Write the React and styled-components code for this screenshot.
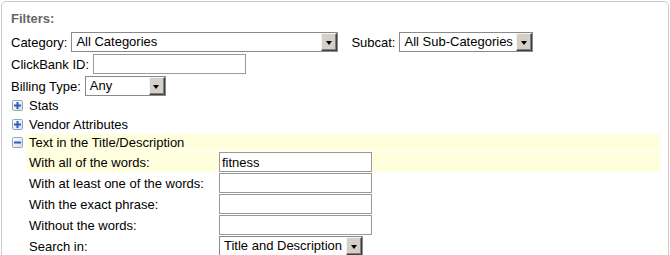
import React from "react";
import styled, { createGlobalStyle } from "styled-components";

const GlobalStyle = createGlobalStyle`
  html, body {
    margin: 0;
    padding: 0;
    background: #fff;
  }
  body {
    font-family: "Liberation Sans", Arial, sans-serif;
    font-size: 13px;
    color: #000;
  }
`;

const Panel = styled.div`
  box-sizing: border-box;
  margin: 1px 0 0 1px;
  width: 668px;
  height: 300px;
  border: 1px solid #cccccc;
  border-radius: 5px;
  padding: 9px 9px 8px;
`;

const Heading = styled.div`
  font-weight: bold;
  color: #666;
  line-height: 15px;
  margin-bottom: 5px;
`;

const FieldRow = styled.div`
  display: flex;
  align-items: center;
  height: 22px;
  gap: 4px;
  line-height: 15px;
`;

const Spacer = styled.span`
  width: 5px;
`;

const SelectBox = styled.div`
  box-sizing: border-box;
  display: flex;
  align-items: stretch;
  width: ${(p) => p.$w}px;
  height: 20px;
  border: 1px solid #8a8a8a;
  background: #fff;
`;

const SelectText = styled.span`
  flex: 1;
  padding-left: 4px;
  line-height: 18px;
  white-space: nowrap;
  overflow: hidden;
`;

const ArrowButton = styled.span`
  box-sizing: border-box;
  width: 16px;
  display: flex;
  align-items: center;
  justify-content: center;
  background: #d4d0c8;
  border-top: 1px solid #f4f3ef;
  border-left: 1px solid #f4f3ef;
  border-right: 1px solid #404040;
  border-bottom: 1px solid #404040;
  box-shadow: inset -1px -1px 0 #808080;

  &::after {
    content: "";
    width: 0;
    height: 0;
    border-left: 3.5px solid transparent;
    border-right: 3.5px solid transparent;
    border-top: 4px solid #000;
    margin: 1px 1px 0 0;
  }
`;

const TextInput = styled.input`
  box-sizing: border-box;
  width: ${(p) => p.$w || 153}px;
  height: 20px;
  margin: 0;
  border: 1px solid #9a9a9a;
  padding: 0 2px;
  font-family: "Liberation Sans", Arial, sans-serif;
  font-size: 13px;
  color: #000;
  background: #fff;
  outline: none;
`;

const ToggleList = styled.div`
  display: flex;
  flex-direction: column;
  gap: 1px;
  margin-top: -1px;
`;

const ToggleRow = styled.div`
  display: grid;
  grid-template-columns: 16px 1fr;
  height: ${(p) => p.$h || 18}px;
  align-items: center;
`;

const ToggleLabel = styled.div`
  height: 100%;
  display: flex;
  align-items: center;
  padding-left: 2px;
  background: ${(p) => (p.$hl ? "#ffffdd" : "transparent")};
  margin-right: -1px;
`;

const SubRow = styled.div`
  display: grid;
  grid-template-columns: 192px 153px 1fr;
  height: 20px;
  margin-left: 16px;
  margin-right: -1px;
  background: ${(p) => (p.$hl ? "#ffffdd" : "transparent")};
`;

const SubLabel = styled.div`
  display: flex;
  align-items: center;
  padding-left: 2px;
`;

function ToggleIcon({ open }) {
  return (
    <svg width="11" height="11" viewBox="0 0 11 11" style={{ marginLeft: 1 }}>
      <defs>
        <linearGradient id="tg" x1="0" y1="0" x2="1" y2="1">
          <stop offset="0" stopColor="#ffffff" />
          <stop offset="1" stopColor="#d8dde6" />
        </linearGradient>
      </defs>
      <rect x="0.5" y="0.5" width="10" height="10" rx="1" fill="url(#tg)" stroke="#9aa3b0" />
      <rect x="2" y="4.5" width="7" height="2" fill="#2a5cc6" />
      {!open && <rect x="4.5" y="2" width="2" height="7" fill="#2a5cc6" />}
    </svg>
  );
}

function Select({ width, value }) {
  return (
    <SelectBox $w={width}>
      <SelectText>{value}</SelectText>
      <ArrowButton />
    </SelectBox>
  );
}

const textRows = [
  { label: "With all of the words:", value: "fitness", hl: true },
  { label: "With at least one of the words:", value: "" },
  { label: "With the exact phrase:", value: "" },
  { label: "Without the words:", value: "" },
];

export default function App() {
  return (
    <>
      <GlobalStyle />
      <Panel>
        <Heading>Filters:</Heading>
        <FieldRow>
          <span>Category:</span>
          <Select width={267} value="All Categories" />
          <Spacer />
          <span>Subcat:</span>
          <Select width={134} value="All Sub-Categories" />
        </FieldRow>
        <FieldRow>
          <span>ClickBank ID:</span>
          <TextInput $w={153} defaultValue="" />
        </FieldRow>
        <FieldRow>
          <span>Billing Type:</span>
          <Select width={81} value="Any" />
        </FieldRow>
        <ToggleList>
          <ToggleRow>
            <ToggleIcon />
            <ToggleLabel>Stats</ToggleLabel>
          </ToggleRow>
          <ToggleRow>
            <ToggleIcon />
            <ToggleLabel>Vendor Attributes</ToggleLabel>
          </ToggleRow>
          <ToggleRow $h={17}>
            <ToggleIcon open />
            <ToggleLabel $hl>Text in the Title/Description</ToggleLabel>
          </ToggleRow>
          {textRows.map((r) => (
            <SubRow key={r.label} $hl={r.hl}>
              <SubLabel>{r.label}</SubLabel>
              <TextInput defaultValue={r.value} />
            </SubRow>
          ))}
          <SubRow>
            <SubLabel>Search in:</SubLabel>
            <Select width={144} value="Title and Description" />
          </SubRow>
        </ToggleList>
      </Panel>
    </>
  );
}
